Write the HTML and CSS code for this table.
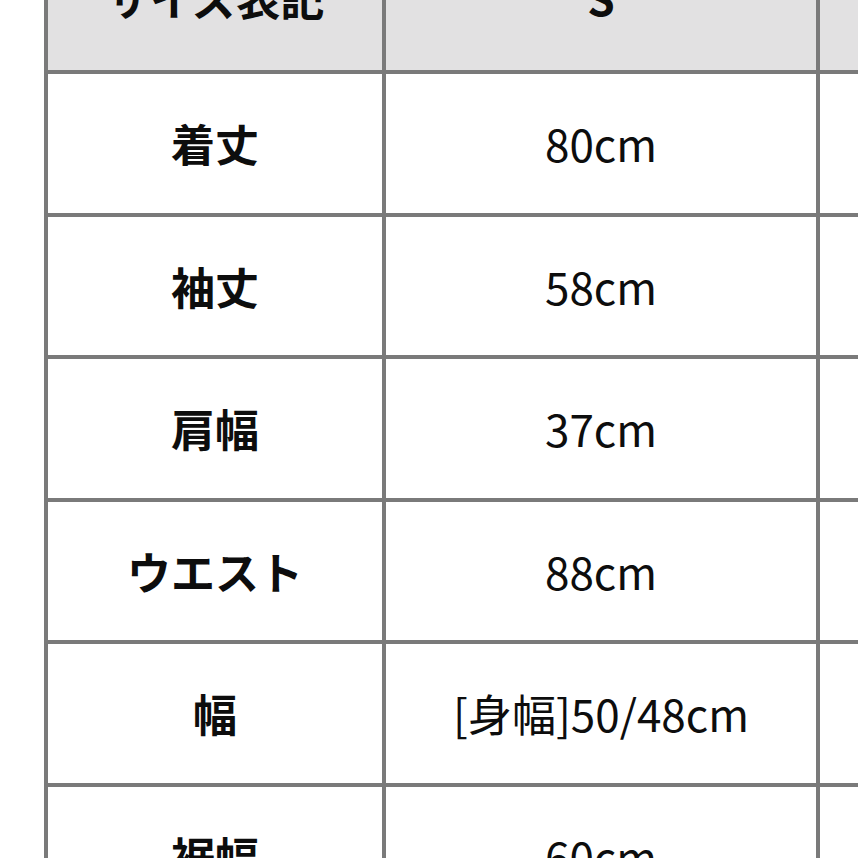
FILE: index.html
```html
<!DOCTYPE html>
<html lang="ja">
<head>
<meta charset="utf-8">
<title>サイズ表</title>
<link rel="stylesheet" href="styles.css">
</head>
<body>
<div class="size-table">
  <div class="cell head label">サイズ表記</div>
  <div class="cell head label">S</div>
  <div class="cell head"></div>

  <div class="cell label">着丈</div>
  <div class="cell value">80cm</div>
  <div class="cell"></div>

  <div class="cell label">袖丈</div>
  <div class="cell value">58cm</div>
  <div class="cell"></div>

  <div class="cell label">肩幅</div>
  <div class="cell value">37cm</div>
  <div class="cell"></div>

  <div class="cell label">ウエスト</div>
  <div class="cell value">88cm</div>
  <div class="cell"></div>

  <div class="cell label">幅</div>
  <div class="cell value">[身幅]50/48cm</div>
  <div class="cell"></div>

  <div class="cell label">裾幅</div>
  <div class="cell value">60cm</div>
  <div class="cell"></div>
</div>
</body>
</html>
```

FILE: styles.css
```css
html, body {
  margin: 0;
  padding: 0;
  overflow: hidden;
  background: #ffffff;
  width: 858px;
  height: 858px;
}

.size-table {
  display: grid;
  grid-template-columns: 334px 430px 431px;
  grid-auto-rows: 138.5px;
  gap: 4px;
  width: max-content;
  margin: -68.5px 0 0 44px;
  padding: 0 0 0 4px;
  background: #7a7a7a;
  font-family: "Noto Sans CJK JP", "Noto Sans", sans-serif;
  font-size: 44px;
  color: #0d0d0d;
}

.cell {
  background: #ffffff;
  display: flex;
  align-items: center;
  justify-content: center;
  white-space: nowrap;
}

.cell.head {
  background: #e2e1e2;
  padding-bottom: 8px;
}

.label {
  font-weight: 700;
}

.value {
  font-weight: 400;
}
```
